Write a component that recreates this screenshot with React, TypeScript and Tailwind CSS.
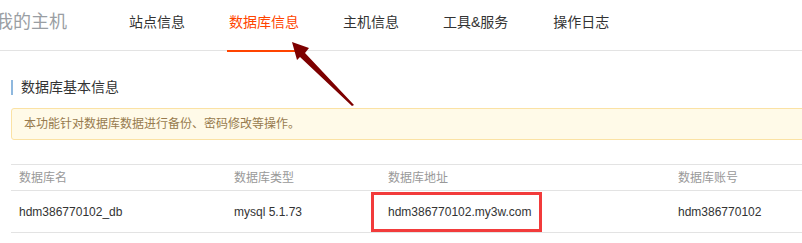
import React from "react";

const font = { fontFamily: '"Liberation Sans", "Noto Sans CJK SC", sans-serif' };

export default function App() {
  return (
    <div className="relative w-[802px] h-[243px] overflow-hidden bg-white" style={font}>
      {/* Nav */}
      <div className="flex items-start h-[51px] border-b border-[#e3e3e3] w-[900px]">
        <div className="h-[52px] pb-[8px] flex items-center ml-[-5px] text-[18px] text-[#9a9ea3] whitespace-nowrap">我的主机</div>
        <div className="h-[52px] pb-[8px] flex items-center ml-[62px] text-[14px] text-[#333] whitespace-nowrap">站点信息</div>
        <div className="h-[52px] pb-[6px] flex items-center ml-[42px] px-[2px] border-b-2 border-[#ff4400] text-[14px] text-[#ff4400] whitespace-nowrap">数据库信息</div>
        <div className="h-[52px] pb-[8px] flex items-center ml-[42px] text-[14px] text-[#333] whitespace-nowrap">主机信息</div>
        <div className="h-[52px] pb-[8px] flex items-center ml-[44px] text-[14px] text-[#333] whitespace-nowrap">工具&amp;服务</div>
        <div className="h-[52px] pb-[8px] flex items-center ml-[45px] text-[14px] text-[#333] whitespace-nowrap">操作日志</div>
      </div>

      {/* Section */}
      <div className="pl-[11px] w-[900px]">
        <div className="mt-[29px] border-l-2 border-[#8fb8de] pl-[8px] text-[14px] leading-[15px] text-[#333]">数据库基本信息</div>
        <div className="mt-[13px] h-[32px] rounded-[3px] border border-[#fbe2a4] bg-[#fffae8] pl-[12px] flex items-center text-[12px] text-[#977a4e]">
          本功能针对数据库数据进行备份、密码修改等操作。
        </div>

        <div className="mt-[24px] border-t border-[#e3e3e3]">
          <div className="flex h-[26px] items-center border-b border-[#e3e3e3] text-[12px] text-[#999]">
            <div className="w-[215px] pl-[8px]">数据库名</div>
            <div className="w-[154px] pl-[8px]">数据库类型</div>
            <div className="w-[290px] pl-[8px]">数据库地址</div>
            <div className="pl-[8px]">数据库账号</div>
          </div>
          <div className="flex h-[42px] items-center border-b border-[#e3e3e3] text-[12px] text-[#333]">
            <div className="w-[215px] pl-[8px]">hdm386770102_db</div>
            <div className="w-[154px] pl-[8px]">mysql 5.1.73</div>
            <div className="relative w-[290px] pl-[8px] h-full flex items-center">
              hdm386770102.my3w.com
              <div className="absolute left-[-9px] top-[1px] w-[171px] h-[40px] border-[3px] border-[#f23b3b]" />
            </div>
            <div className="pl-[8px]">hdm386770102</div>
          </div>
        </div>
      </div>

      {/* Arrow annotation */}
      <svg className="absolute left-0 top-0 pointer-events-none" width="802" height="243" viewBox="0 0 802 243">
        <polygon
          points="292,42 309,48 305,53 354,105 352,106 300,57 297,60"
          fill="#7d0000"
        />
      </svg>
    </div>
  );
}
